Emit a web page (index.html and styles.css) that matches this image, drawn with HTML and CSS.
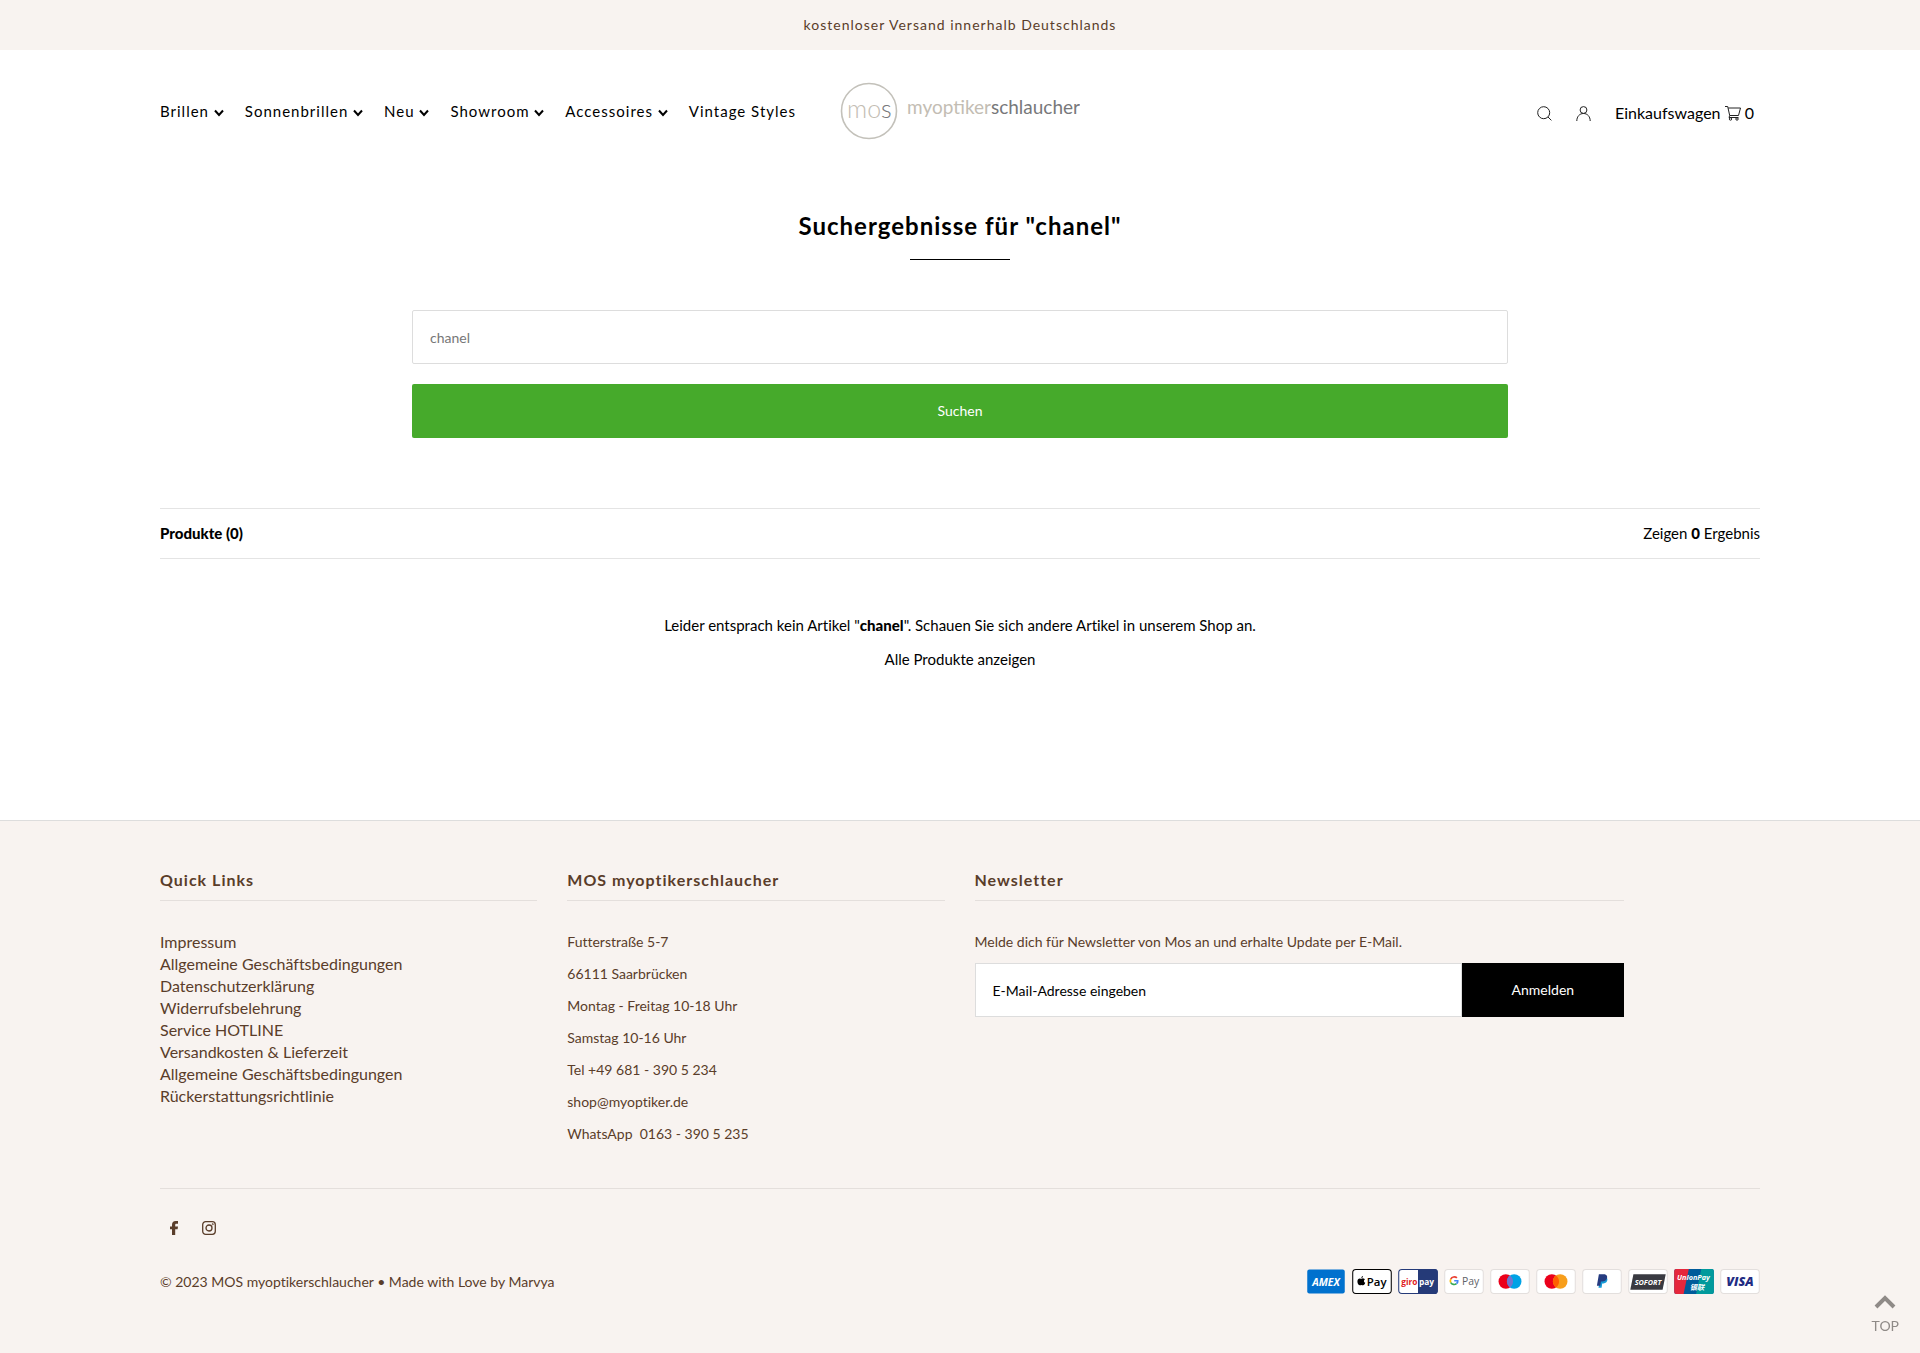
FILE: index.html
```html
<!DOCTYPE html>
<html lang="de">
<head>
<meta charset="utf-8">
<meta name="viewport" content="width=device-width, initial-scale=1">
<title>Suchergebnisse für "chanel"</title>
<link rel="stylesheet" href="styles.css">
</head>
<body>
<div class="announcement">kostenloser Versand innerhalb Deutschlands</div>

<header class="header container">
  <nav class="nav">
    <a href="#">Brillen <svg class="chevron" viewBox="0 0 10 8"><path d="M1 1.5 5 6 9 1.5"/></svg></a>
    <a href="#">Sonnenbrillen <svg class="chevron" viewBox="0 0 10 8"><path d="M1 1.5 5 6 9 1.5"/></svg></a>
    <a href="#">Neu <svg class="chevron" viewBox="0 0 10 8"><path d="M1 1.5 5 6 9 1.5"/></svg></a>
    <a href="#">Showroom <svg class="chevron" viewBox="0 0 10 8"><path d="M1 1.5 5 6 9 1.5"/></svg></a>
    <a href="#">Accessoires <svg class="chevron" viewBox="0 0 10 8"><path d="M1 1.5 5 6 9 1.5"/></svg></a>
    <a href="#">Vintage Styles</a>
  </nav>
  <a class="logo" href="#" aria-label="MOS myoptikerschlaucher">
    <svg width="240" height="60" viewBox="0 0 240 60">
      <circle cx="29" cy="30" r="27.5" fill="none" stroke="#c3c1ba" stroke-width="1.6"/>
      <text class="logo-mos" x="7" y="37">mo<tspan class="logo-dark">s</tspan></text>
      <text class="logo-name" x="67" y="33">myoptiker<tspan class="logo-dark">schlaucher</tspan></text>
    </svg>
  </a>
  <div class="tools">
    <a href="#" aria-label="Suche"><svg width="15" height="15" viewBox="0 0 15 15"><circle cx="6.7" cy="6.7" r="6"/><path d="m11 11 3.4 3.4"/></svg></a>
    <a href="#" aria-label="Konto"><svg width="15" height="15" viewBox="0 0 15 15"><circle cx="7.5" cy="4" r="3.4"/><path d="M.8 15c0-4.500 2.800-7.500 6.700-7.500s6.700 3 6.700 7.500"/></svg></a>
    <a class="cart" href="#">Einkaufswagen <svg width="16" height="16" viewBox="0 0 16 16"><path d="M0 1.500h2.700l2 9h8.800l2-7.500H3.200M4.700 10.500l-.7 2h9.500"/><circle cx="5.500" cy="14" r="1.200"/><circle cx="12" cy="14" r="1.200"/></svg> 0</a>
  </div>
</header>

<main class="container">
  <h1 class="title">Suchergebnisse für "chanel"</h1>
  <form class="search">
    <input type="text" aria-label="Suche" placeholder="chanel">
    <button type="button">Suchen</button>
  </form>
  <div class="summary"><strong>Produkte (0)</strong><span>Zeigen <strong>0</strong> Ergebnis</span></div>
  <div class="empty">
    <p>Leider entsprach kein Artikel "<strong>chanel</strong>". Schauen Sie sich andere Artikel in unserem Shop an.</p>
    <p><a href="#">Alle Produkte anzeigen</a></p>
  </div>
</main>

<footer class="footer">
  <div class="container">
    <div class="columns">
      <section>
        <h2>Quick Links</h2>
        <ul class="links">
          <li><a href="#">Impressum</a></li>
          <li><a href="#">Allgemeine Geschäftsbedingungen</a></li>
          <li><a href="#">Datenschutzerklärung</a></li>
          <li><a href="#">Widerrufsbelehrung</a></li>
          <li><a href="#">Service HOTLINE</a></li>
          <li><a href="#">Versandkosten &amp; Lieferzeit</a></li>
          <li><a href="#">Allgemeine Geschäftsbedingungen</a></li>
          <li><a href="#">Rückerstattungsrichtlinie</a></li>
        </ul>
      </section>
      <section>
        <h2>MOS myoptikerschlaucher</h2>
        <div class="address">
          <p>Futterstraße 5-7</p>
          <p>66111 Saarbrücken</p>
          <p>Montag - Freitag 10-18 Uhr</p>
          <p>Samstag 10-16 Uhr</p>
          <p>Tel +49 681 - 390 5 234</p>
          <p>shop@myoptiker.de</p>
          <p>WhatsApp&nbsp; 0163 - 390 5 235</p>
        </div>
      </section>
      <section>
        <h2>Newsletter</h2>
        <label class="newsletter-label" for="email">Melde dich für Newsletter von Mos an und erhalte Update per E-Mail.</label>
        <form class="newsletter">
          <input id="email" type="email" placeholder="E-Mail-Adresse eingeben">
          <button type="button">Anmelden</button>
        </form>
      </section>
    </div>
    <div class="social">
      <a href="#" aria-label="Facebook"><svg width="14" height="14" viewBox="0 0 14 14"><path fill="#5a3d2a" d="M5 14V8.300H3V5.500h2V4C5 1.400 6.300 0 8.700 0H11v2.800H9.500C8.500 2.800 8.200 3.200 8.200 4v1.500H11l-.4 2.800H8.200V14z"/></svg></a>
      <a href="#" aria-label="Instagram"><svg width="14" height="14" viewBox="0 0 14 14" fill="none" stroke="#5a3d2a" stroke-width="1.300"><rect x=".7" y=".7" width="12.600" height="12.600" rx="3"/><circle cx="7" cy="7" r="3"/><circle cx="10.700" cy="3.300" r=".3"/></svg></a>
    </div>
    <div class="bottom">
      <p>© 2023 MOS myoptikerschlaucher • Made with Love by <a href="#">Marvya</a></p>
      <div class="cards">
        <svg viewBox="0 0 38 24"><rect x="1" y=".5" width="36" height="23" rx="2" fill="#0071ce"/><text class="amex" x="19" y="16">AMEX</text></svg>
        <svg viewBox="0 0 38 24"><rect x=".5" y=".5" width="37" height="23" rx="3" fill="#fff" stroke="#000"/><path d="M8.800 8.600c1-.1 1.600-.9 1.500-2-.9.100-1.600 1-1.500 2zM5 12c0-2 1-3 2.300-3 .6 0 1 .3 1.500.3s1-.4 1.900-.3c.6 0 1.200.4 1.500.8-1.400.9-1.200 2.900.3 3.500-.4 1.100-1.100 2.400-2.100 2.400-.6 0-.8-.3-1.500-.3s-1 .3-1.500.3C6.200 15.700 5 13.800 5 12z"/><text class="pay" x="14" y="16" fill="#000">Pay</text></svg>
        <svg viewBox="0 0 38 24"><rect x=".5" y=".5" width="37" height="23" rx="3" fill="#fff" stroke="#253a78"/><path fill="#253a78" d="M19 0h16a3 3 0 0 1 3 3v18a3 3 0 0 1-3 3H19z"/><text class="giro" x="3" y="15" fill="#e02020">giro</text><text class="giro" x="20" y="15" fill="#fff">pay</text></svg>
        <svg viewBox="0 0 38 24"><rect class="card" x=".5" y=".5" width="37" height="23" rx="3"/><g fill="none" stroke-width="1.600"><path stroke="#ea4335" d="M12.200 8.600A3.700 3.700 0 0 0 6.300 9.700"/><path stroke="#fbbc05" d="M6.300 9.700a3.700 3.700 0 0 0 0 3.300"/><path stroke="#34a853" d="M6.300 13a3.700 3.700 0 0 0 5.500 1.100"/><path stroke="#4285f4" d="M11.800 14.100c1-.8 1.300-1.800 1.200-2.800H9.600"/></g><text class="gpay" x="17" y="15">Pay</text></svg>
        <svg viewBox="0 0 38 24"><rect class="card" x=".5" y=".5" width="37" height="23" rx="3"/><circle cx="15" cy="12" r="7" fill="#eb001b"/><circle cx="23" cy="12" r="7" fill="#00a2e5"/><path fill="#7375cf" d="M19 6.300a7 7 0 0 1 0 11.400 7 7 0 0 1 0-11.400z"/></svg>
        <svg viewBox="0 0 38 24"><rect class="card" x=".5" y=".5" width="37" height="23" rx="3"/><circle cx="15" cy="12" r="7" fill="#eb001b"/><circle cx="23" cy="12" r="7" fill="#f79e1b"/><path fill="#ff5f00" d="M19 6.300a7 7 0 0 1 0 11.400 7 7 0 0 1 0-11.400z"/></svg>
        <svg viewBox="0 0 38 24"><rect class="card" x=".5" y=".5" width="37" height="23" rx="3"/><path fill="#179bd7" d="M17.500 8h5.500c2 1 1.700 5.500-2.500 6h-1.300l-.6 4h-3z"/><path fill="#253b80" d="M16 5h4.500c3.500 0 4 2.500 3 4.700-.8 1.700-2 2.300-4.300 2.300h-1.200l-.7 4h-3.200z"/></svg>
        <svg viewBox="0 0 38 24"><rect class="card" x=".5" y=".5" width="37" height="23" rx="3"/><path fill="#393a41" d="M5 5h31l-3 15H2z"/><text class="sofort" x="19" y="15">SOFORT</text></svg>
        <svg viewBox="0 0 38 24"><rect width="38" height="24" rx="2" fill="#005b9a"/><path fill="#e5273c" d="M2 0h12L9 24H2a2 2 0 0 1-2-2V2a2 2 0 0 1 2-2z"/><path fill="#019a9c" d="M26 0h10a2 2 0 0 1 2 2v20a2 2 0 0 1-2 2H21z"/><text class="union" x="18.500" y="11">UnionPay</text><text class="union" x="22" y="20">银联</text></svg>
        <svg viewBox="0 0 38 24"><rect class="card" x=".5" y=".5" width="37" height="23" rx="3"/><text class="visa" x="19" y="16">VISA</text></svg>
      </div>
    </div>
  </div>
</footer>

<a class="to-top" href="#"><svg width="22" height="14" viewBox="0 0 22 14"><path d="m2 12 9-9 9 9"/></svg>TOP</a>
</body>
</html>
```
FILE: styles.css
```css
* { box-sizing: border-box; }

body {
  margin: 0;
  min-height: 100vh;
  display: flex;
  flex-direction: column;
  background: #fff;
  color: #000;
  font: 14px/22px Lato, "Liberation Sans", sans-serif;
  font-variant-ligatures: none;
}

a { color: inherit; text-decoration: none; }
p, h1, h2, ul { margin: 0; padding: 0; }
ul { list-style: none; }
strong { font-weight: 900; }
input, button { font: inherit; border-radius: 0; }

.container { width: 100%; max-width: 1680px; margin: 0 auto; padding: 0 40px; }

.announcement {
  padding: 14px 20px;
  background: #f8f3f0;
  color: #5a3d2a;
  letter-spacing: 1px;
  text-align: center;
}

.header {
  display: grid;
  grid-template-columns: 1fr auto 1fr;
  align-items: center;
  padding-top: 31px;
  padding-bottom: 31px;
}
.nav { display: flex; gap: 21px; font-size: 15px; letter-spacing: 1px; white-space: nowrap; }
.chevron { width: 10px; height: 8px; fill: none; stroke: #000; stroke-width: 2; }
.logo svg { display: block; }
.logo-mos { font: 300 25px Lato, sans-serif; fill: #c3bdb3; }
.logo-name { font: 19px Lato, sans-serif; fill: #c3bdb3; }
.logo-dark { fill: #77787a; }
.tools { display: flex; justify-content: flex-end; align-items: center; gap: 24px; padding: 4px 6px 0 0; font-size: 16px; }
.tools svg { fill: none; stroke: #222; stroke-width: 1; vertical-align: -2px; }

.title {
  display: flex;
  flex-direction: column;
  align-items: center;
  gap: 17px;
  padding-top: 38px;
  font-size: 24px;
  line-height: 32px;
  font-weight: 700;
  letter-spacing: 1px;
}
.title::after { content: ""; width: 100px; height: 1px; background: #000; }

.search { display: flex; flex-direction: column; gap: 20px; max-width: 1096px; margin: 50px auto 70px; }
.search input { height: 54px; padding: 0 17px; border: 1px solid #ddd; border-radius: 2px; }
.search input::placeholder { color: #777; }
.search button { height: 54px; border: 0; border-radius: 2px; background: #46aa2b; color: #fff; }

.summary {
  display: flex;
  justify-content: space-between;
  padding: 13px 0 14px;
  border: solid #e4e4e4;
  border-width: 1px 0;
  font-size: 15px;
}
.empty { display: flex; flex-direction: column; gap: 12px; padding: 55px 0 150px; font-size: 15px; text-align: center; }

.footer { flex: 1; border-top: 1px solid #ddd; background: #f8f3f0; color: #5a3d2a; }
.columns {
  display: grid;
  grid-template-columns: 377fr 377fr 649fr;
  gap: 30px;
  padding: 47px 136px 44px 0;
  position: relative;
}
.columns::after {
  content: "";
  position: absolute;
  inset: auto 0 0;
  border-bottom: 1px solid #e4dfdc;
}
.columns h2 {
  margin-bottom: 30px;
  padding-bottom: 8px;
  border-bottom: 1px solid #e4dfdc;
  font-size: 16px;
  line-height: 24px;
  letter-spacing: 1px;
}
.links { font-size: 16px; }
.address { display: grid; gap: 10px; }
.newsletter-label { display: block; margin-bottom: 10px; }
.newsletter { display: flex; }
.newsletter input { flex: 3; min-width: 0; height: 54px; padding: 0 17px; border: 1px solid #ddd; background: #fff; }
.newsletter input::placeholder { color: #000; }
.newsletter button { flex: 1; border: 0; background: #000; color: #fff; }

.social { display: flex; gap: 21px; padding: 32px 7px 34px; }
.social svg { display: block; }
.bottom { display: flex; justify-content: space-between; align-items: center; padding-bottom: 50px; }
.cards { display: flex; gap: 6px; }
.cards svg { width: 40px; height: 25px; }
.card { fill: #fff; stroke: #e3dfdd; }
.cards text { font-family: "Open Sans", "Noto Sans CJK SC", sans-serif; font-weight: 700; }
.cards .amex, .cards .sofort, .cards .union, .cards .visa { text-anchor: middle; font-style: italic; fill: #fff; }
.cards .amex { font-size: 10px; }
.cards .pay { font-size: 11px; font-weight: 600; }
.cards .giro { font-size: 8px; }
.cards .gpay { font-size: 10px; font-weight: 400; fill: #5f6368; }
.cards .sofort { font-size: 7px; }
.cards .union { font-size: 7px; }
.cards .visa { font-size: 12px; fill: #222c83; font-weight: 800; }

.to-top {
  position: fixed;
  right: 21px;
  bottom: 16px;
  display: flex;
  flex-direction: column;
  align-items: center;
  gap: 6px;
  color: #8f8a87;
}
.to-top svg { fill: none; stroke: #8f8a87; stroke-width: 4; }
```
